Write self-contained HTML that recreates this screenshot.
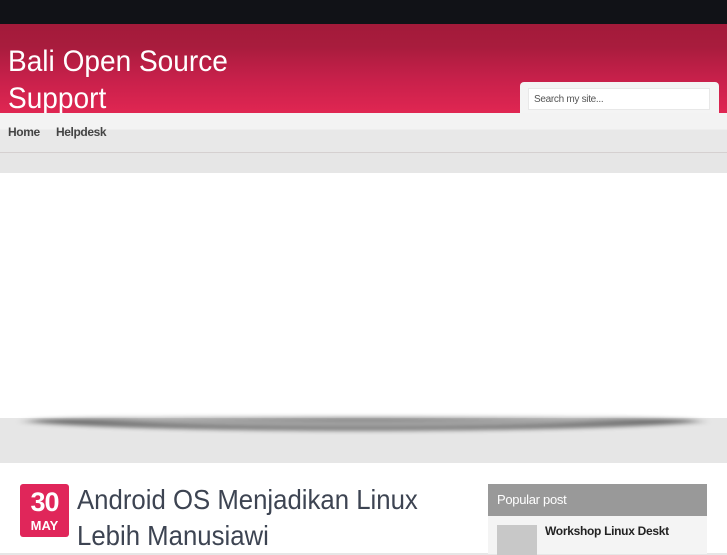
<!DOCTYPE html>
<html><head><style>
*{margin:0;padding:0;box-sizing:border-box}
body{width:727px;height:545px;overflow:hidden;font-family:"Liberation Sans",sans-serif;background:#e6e6e6;position:relative}
.top{position:absolute;left:0;top:0;width:727px;height:24px;background:#111217}
.hdr{position:absolute;left:0;top:24px;width:727px;height:89px;background:linear-gradient(#a31a3a 0%,#a81c3d 25%,#c6204a 60%,#e02652 100%)}
.title{position:absolute;left:8px;top:43px;color:#fff;font-size:30px;line-height:37px;transform:scaleX(0.935);transform-origin:0 0;white-space:nowrap}
.sbox{position:absolute;left:520px;top:82px;width:199px;height:34px;background:#f4f4f4;border-radius:4px 4px 0 0}
.sin{position:absolute;left:528px;top:88px;width:182px;height:22px;background:#fff;border:1px solid #e8e8e8;font-size:10px;color:#555;padding:5px 5px;letter-spacing:-0.3px}
.nav{position:absolute;left:0;top:113px;width:727px;height:40px;background:linear-gradient(#f3f3f3 0,#f3f3f3 16px,#e8e8e8 17px,#e8e8e8 100%);border-bottom:1px solid #d5d0d0}
.nav span{position:absolute;top:12px;font-size:12px;font-weight:bold;color:#444;letter-spacing:-0.4px}
.white{position:absolute;left:0;top:173px;width:727px;height:245px;background:#fff}
.shadow{position:absolute;left:6px;top:417px;width:715px;height:14px;border-radius:50%/100%;background:radial-gradient(ellipse 52% 100% at 50% 0,rgba(0,0,0,.45),rgba(0,0,0,.25) 60%,rgba(0,0,0,.6) 92%,transparent 100%);filter:blur(2px)}
.main{position:absolute;left:0;top:463px;width:727px;height:90px;background:#fff}
.date{position:absolute;left:20px;top:484px;width:49px;height:53px;background:#e0265a;border-radius:3px;color:#fff;text-align:center}
.date b{display:block;font-size:27px;line-height:34px;margin-top:1px;letter-spacing:-1px}
.date i{display:block;font-style:normal;font-weight:bold;font-size:13px;line-height:14px}
.ptitle{position:absolute;left:77px;top:482px;font-size:28px;line-height:36px;color:#3d4452;transform:scaleX(0.92);transform-origin:0 0;white-space:nowrap}
.side{position:absolute;left:488px;top:484px;width:219px;height:70px;background:#f4f4f4}
.sh{height:32px;background:#999;color:#fff;font-size:13px;padding:8px 9px;letter-spacing:-0.3px}
.thumb{position:absolute;left:9px;top:41px;width:40px;height:30px;background:#c8c8c8}
.st{position:absolute;left:57px;top:40px;font-size:12px;font-weight:bold;color:#222;letter-spacing:-0.3px}
</style></head><body>
<div class="top"></div>
<div class="hdr"></div>
<div class="title">Bali Open Source<br>Support</div>
<div class="sbox"></div>
<div class="sin">Search my site...</div>
<div class="nav"><span style="left:8px">Home</span><span style="left:56px">Helpdesk</span></div>
<div class="white"></div>
<div class="shadow"></div>
<div class="main"></div>
<div class="date"><b>30</b><i>MAY</i></div>
<div class="ptitle">Android OS Menjadikan Linux<br>Lebih Manusiawi</div>
<div class="side"><div class="sh">Popular post</div><div class="thumb"></div><div class="st">Workshop Linux Deskt</div></div>
</body></html>
